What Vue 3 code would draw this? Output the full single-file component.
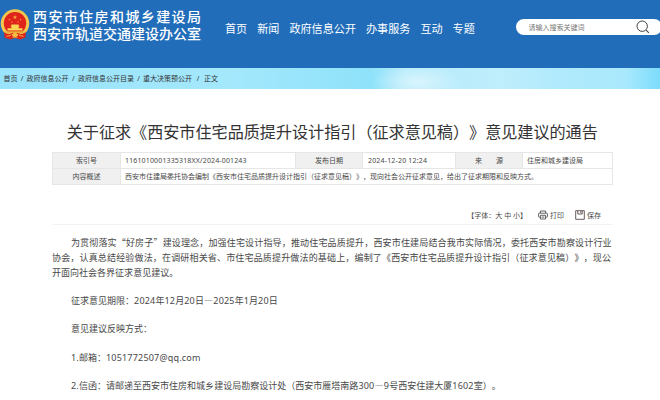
<script setup>
const nav = ['首页', '新闻', '政府信息公开', '办事服务', '互动', '专题']
const crumbs = [
  { text: '首页', gap: 'g0' },
  { text: '政府信息公开', gap: 'g1' },
  { text: '政府信息公开目录', gap: 'g2' },
  { text: '重大决策预公开', gap: 'g3' },
  { text: '正文', gap: 'g4' },
]
const star = (cx, cy, r) =>
  Array.from({ length: 10 }, (_, i) => {
    const a = (Math.PI * i) / 5 - Math.PI / 2
    const k = i % 2 ? r * 0.42 : r
    return `${(cx + k * Math.cos(a)).toFixed(2)},${(cy + k * Math.sin(a)).toFixed(2)}`
  }).join(' ')
const stars = [star(15, 8.2, 2.3), star(9.4, 10.6, 1.1), star(20.6, 10.6, 1.1), star(12, 13, 1), star(18, 13, 1)]
</script>

<template>
  <div class="page" lang="zh-CN">
    <header class="header">
      <svg class="emblem" viewBox="0 0 30 31">
        <path d="M5 24 L4.5 28.5 L10 30.5 L15 29 L20 30.5 L25.5 28.5 L25 24Z" fill="#dc241c" />
        <circle cx="15" cy="14.5" r="14.2" fill="#f3c64d" />
        <circle cx="15" cy="14.2" r="11.2" fill="#e0231b" />
        <polygon v-for="s in stars" :key="s" :points="s" fill="#f8a93c" />
        <path d="M10.5 17.6 L11.6 15.6 H18.4 L19.5 17.6 H18.6 V19.2 H22.5 V21.6 H7.5 V19.2 H11.4 V17.6Z" fill="#fbd653" />
        <path d="M5 22.3 H25 L23 24 H7Z" fill="#e9ae38" />
        <path d="M4 23.2 Q8 25.5 11.5 25 L13 27.5 H17 L18.5 25 Q22 25.5 26 23.2 L25 28.2 L20.5 29.8 L17.5 28.2 H12.5 L9.5 29.8 L5 28.2Z" fill="#df241b" />
        <circle cx="15" cy="26" r="2.3" fill="#f3bd42" />
        <path d="M6.5 27.3 L11 26.3 M23.5 27.3 L19 26.3" stroke="#f3bd42" stroke-width="0.9" />
      </svg>
      <div class="org">
        <div class="org-a">西安市住房和城乡建设局</div>
        <div class="org-b">西安市轨道交通建设办公室</div>
      </div>
      <nav class="nav">
        <a v-for="n in nav" :key="n">{{ n }}</a>
      </nav>
      <div class="search">
        <span>请输入搜索关键词</span>
        <svg class="glass" viewBox="0 0 14 14">
          <circle cx="6.2" cy="6.2" r="5.2" fill="none" stroke="#444" stroke-width="1" />
          <path d="M10.2 10.2 L12.8 12.8" stroke="#444" stroke-width="1.1" />
        </svg>
      </div>
    </header>

    <div class="crumbs">
      <template v-for="(c, i) in crumbs" :key="c.text">
        <i v-if="i" :class="c.gap">/</i>
        <a>{{ c.text }}</a>
      </template>
    </div>

    <main class="main">
      <h1>关于征求《西安市住宅品质提升设计指引（征求意见稿）》意见建议的通告</h1>

      <div class="meta">
        <div class="label">索引号</div>
        <div class="val code">1161010001335318XX/2024-001243</div>
        <div class="label">发布日期</div>
        <div class="val date">2024-12-20 12:24</div>
        <div class="label src"><span>来</span><span>源</span></div>
        <div class="val">住房和城乡建设局</div>
        <div class="label">内容概述</div>
        <div class="val wide">西安市住建局委托协会编制《西安市住宅品质提升设计指引（征求意见稿）》，现向社会公开征求意见，给出了征求期限和反映方式。</div>
      </div>

      <div class="tools">
        <span class="size">【字体：大 中 小】</span>
        <span class="tool print">
          <svg viewBox="0 0 10 10" fill="none" stroke="#555" stroke-width="0.9">
            <path d="M2.4 3.2 V1 H7.6 V3.2" />
            <path d="M2.2 7.2 H1.2 Q0.6 7.2 0.6 6.6 V3.9 Q0.6 3.2 1.3 3.2 H8.7 Q9.4 3.2 9.4 3.9 V6.6 Q9.4 7.2 8.8 7.2 H7.8" />
            <path d="M2.4 5.3 H7.6 V9 H2.4Z M3.6 7.1 H6.4" />
          </svg>打印
        </span>
        <span class="tool save">
          <svg viewBox="0 0 10 10" fill="none" stroke="#5a4a4a" stroke-width="0.9">
            <path d="M0.7 0.7 H9.3 V9.3 H0.7Z" />
            <path d="M2.8 0.9 V4 H7.2 V0.9 M5.8 1.2 V3" />
          </svg>保存
        </span>
      </div>

      <article class="body">
        <p><span class="full">为贯彻落实<span class="q">“</span>好房子<span class="q">”</span>建设理念，加强住宅设计指导，推动住宅品质提升，西安市住建局结合我市实际情况，委托西安市勘察设计行业<br>协会，认真总结经验做法，在调研相关省、市住宅品质提升做法的基础上，编制了《西安市住宅品质提升设计指引（征求意见稿）》，现公</span><br>开面向社会各界征求意见建议。</p>
        <p>征求意见期限：<span class="n">2024</span>年<span class="n">12</span>月<span class="n">20</span>日<span class="q dash">—</span><span class="n">2025</span>年<span class="n">1</span>月<span class="n">20</span>日</p>
        <p>意见建议反映方式：</p>
        <p><span class="n">1.</span>邮箱：<span class="n">1051772507@qq.com</span></p>
        <p><span class="n">2.</span>信函：请邮递至西安市住房和城乡建设局勘察设计处（西安市雁塔南路<span class="n">300</span><span class="q dash">—</span><span class="n">9</span>号西安住建大厦<span class="n">1602</span>室）。</p>
      </article>
    </main>
  </div>
</template>

<style>
body {
  background: #fff;
  overflow: hidden;
}
</style>

<style scoped>
.page {
  width: 660px;
  height: 400px;
  overflow: hidden;
  background: #fff;
  color: #484848;
  font-family: "Noto Sans", "Noto Sans CJK SC", sans-serif;
  text-spacing-trim: space-all;
  white-space: nowrap;
}
.header {
  display: flex;
  height: 68px;
  background: #216dba;
  color: #fff;
}
.emblem {
  width: 30px;
  height: 31px;
  margin-top: 9px;
  flex: none;
}
.org {
  width: 192px;
  padding: 9px 0 0 3px;
  flex: none;
  font-size: 14px;
  font-weight: 500;
  line-height: 16.5px;
}
.org-a {
  letter-spacing: 1.4px;
}
.nav {
  display: flex;
  gap: 10px;
  width: 291px;
  flex: none;
  font-size: 11.1px;
  line-height: 16px;
  padding-top: 21px;
}
.search {
  display: flex;
  align-items: center;
  justify-content: space-between;
  flex: none;
  box-sizing: border-box;
  width: 146px;
  height: 16px;
  margin-top: 19px;
  padding: 0 12px 0 12.5px;
  border-radius: 8px;
  background: #fff;
  color: #777;
  font-size: 7px;
}
.glass {
  width: 14px;
  height: 14px;
}
.crumbs {
  display: flex;
  align-items: center;
  box-sizing: border-box;
  height: 20.5px;
  padding-left: 3.5px;
  font-size: 7px;
  color: #333;
  background:
    radial-gradient(ellipse 45px 18px at 418px 14px, rgba(225, 247, 254, 0.8), rgba(225, 247, 254, 0)),
    linear-gradient(90deg, #99e3fb 0, #a4e8fc 230px, #8ee2fa 370px, #b4eafb 405px, #bfeefc 500px, #b0eafc 560px, #aae9fd 625px, #7cdcfc 660px);
}
.crumbs i {
  font-style: normal;
  text-align: center;
}
.g1 { width: 9px; }
.g2 { width: 9.5px; }
.g3 { width: 9px; }
.g4 { width: 12px; }
.main {
  padding: 0 47.5px 0 52px;
}
h1 {
  margin: 29.5px 0 0;
  text-align: center;
  font-size: 16.1px;
  line-height: 28px;
  font-weight: 400;
  color: #333;
}
.meta {
  display: grid;
  grid-template-columns: 68px 175px 67px 93px 67px 1fr;
  grid-template-rows: 16px 16px;
  margin-top: 5.5px;
  border-top: 1px solid #e6e6e6;
  border-left: 1px solid #e6e6e6;
  font-size: 7px;
  line-height: 15px;
}
.meta > div {
  border-right: 1px solid #e6e6e6;
  border-bottom: 1px solid #e6e6e6;
}
.label {
  background: #f0f0f0;
  text-align: center;
}
.src {
  display: flex;
  justify-content: center;
  gap: 14px;
}
.val {
  padding-left: 4px;
}
.code {
  letter-spacing: 0.15px;
}
.date {
  padding-left: 5px;
  letter-spacing: 0.18px;
}
.wide {
  grid-column: span 5;
}
.tools {
  display: flex;
  justify-content: flex-end;
  align-items: center;
  height: 18px;
  margin-top: 21px;
  padding-right: 11.5px;
  border-bottom: 1px solid #f3f3f3;
  font-size: 7px;
}
.tool {
  display: flex;
  align-items: center;
  gap: 2px;
  margin-left: 11px;
}
.tool svg {
  width: 10px;
  height: 10px;
}
.body {
  padding-top: 10px;
  font-size: 9.03px;
  line-height: 15.3px;
}
.body p {
  margin: 0 0 12.9px;
  text-indent: 2.1em;
}
.full {
  letter-spacing: 0.15px;
}
.n {
  letter-spacing: 0.19px;
}
.q {
  font-family: "Noto Sans CJK SC", sans-serif;
}
.dash {
  letter-spacing: 0.4px;
}
</style>
